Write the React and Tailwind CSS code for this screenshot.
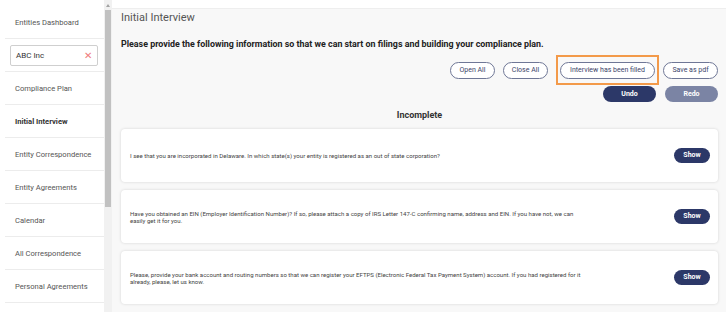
import React from "react";

const navItems = [
  "Compliance Plan",
  "Initial Interview",
  "Entity Correspondence",
  "Entity Agreements",
  "Calendar",
  "All Correspondence",
  "Personal Agreements",
];

const cards = [
  "I see that you are incorporated in Delaware. In which state(s) your entity is registered as an out of state corporation?",
  "Have you obtained an EIN (Employer Identification Number)? If so, please attach a copy of IRS Letter 147-C confirming name, address and EIN. If you have not, we can easily get it for you.",
  "Please, provide your bank account and routing numbers so that we can register your EFTPS (Electronic Federal Tax Payment System) account. If you had registered for it already, please, let us know.",
];

function OutlineBtn({ children, className = "" }) {
  return (
    <button
      className={`h-[17px] rounded-full border border-[#6f7796] bg-white text-[7px] text-[#3b4469] flex items-center justify-center ${className}`}
    >
      {children}
    </button>
  );
}

export default function App() {
  return (
    <div
      className="w-[726px] h-[312px] overflow-hidden flex bg-white"
      style={{ fontFamily: "Roboto, 'Noto Sans', sans-serif" }}
    >
      {/* Sidebar */}
      <div className="w-[104px] shrink-0 pt-[6px] bg-white">
        <div className="ml-[5px] h-[33px] border-b border-[#ececec] flex items-center pt-[2px] pl-[10px] text-[7.6px] text-[#555]">
          Entities Dashboard
        </div>
        <div className="ml-[5px] h-[33px] border-b border-[#ececec] flex items-center pt-[1px] pl-[5px] pr-[6px]">
          <div className="w-full h-[21px] border border-[#cfcfcf] rounded-[2px] flex items-center justify-between px-[5px]">
            <span className="text-[8px] text-[#333]">ABC Inc</span>
            <span className="text-[10px] leading-none text-[#ef7b7b]">✕</span>
          </div>
        </div>
        {navItems.map((t) => (
          <div
            key={t}
            className={`ml-[5px] h-[33px] border-b border-[#ececec] flex items-center pt-[2px] pl-[10px] text-[7.6px] ${
              t === "Initial Interview" ? "font-bold text-[#333]" : "text-[#555]"
            }`}
          >
            {t}
          </div>
        ))}
      </div>

      {/* Scrollbar */}
      <div className="w-[8px] shrink-0 bg-[#f1f1f1] flex flex-col items-center">
        <div className="h-[10px] flex items-center justify-center">
          <div className="w-0 h-0 border-l-[2px] border-r-[2px] border-b-[3px] border-l-transparent border-r-transparent border-b-[#a3a3a3]" />
        </div>
        <div className="w-[6px] h-[197px] bg-[#c1c1c1]" />
      </div>

      {/* Main */}
      <div className="flex-1 flex flex-col">
        <div className="h-[9px] bg-white border-b border-[#eeeeee] shrink-0" />
        <div className="flex-1 bg-[#f8f8f8] pl-[9px] pr-[8px]">
          <div className="mt-[2px] text-[11px] leading-[14px] text-[#555]">Initial Interview</div>
          <div className="mt-[14px] text-[8.9px] leading-[11px] font-bold text-[#222]">
            Please provide the following information so that we can start on filings and building your compliance plan.
          </div>
          <div className="mt-[12px] flex justify-end items-center">
            <OutlineBtn className="w-[45px]">Open All</OutlineBtn>
            <OutlineBtn className="w-[45px] ml-[8px]">Close All</OutlineBtn>
            <div className="relative ml-[12px]">
              <OutlineBtn className="w-[95px]">Interview has been filled</OutlineBtn>
              <div className="absolute -left-[4px] -right-[4px] -top-[7px] -bottom-[6px] border-2 border-[#f39a4a] pointer-events-none" />
            </div>
            <OutlineBtn className="w-[55px] ml-[8px]">Save as pdf</OutlineBtn>
          </div>
          <div className="mt-[7px] flex justify-end gap-[9px]">
            <button className="w-[53px] h-[16px] rounded-full bg-[#2c3868] text-white text-[7px] font-bold">Undo</button>
            <button className="w-[53px] h-[16px] rounded-full bg-[#7b84a4] text-white text-[7px] font-bold">Redo</button>
          </div>
          <div className="mt-[7px] text-center text-[9px] leading-[12px] font-bold text-[#333]">Incomplete</div>
          <div className="mt-[8px] flex flex-col gap-[8px]">
            {cards.map((c, i) => (
              <div
                key={i}
                className="h-[53px] bg-white rounded-[4px] shadow-[0_0_3px_rgba(0,0,0,0.15)] flex items-center justify-between pl-[9px] pr-[8px]"
              >
                <div className="w-[455px] text-[6.05px] leading-[7px] text-[#444]">{c}</div>
                <button className="w-[36px] h-[15px] rounded-full bg-[#2c3868] text-white text-[7px] font-bold">Show</button>
              </div>
            ))}
          </div>
        </div>
      </div>
    </div>
  );
}
